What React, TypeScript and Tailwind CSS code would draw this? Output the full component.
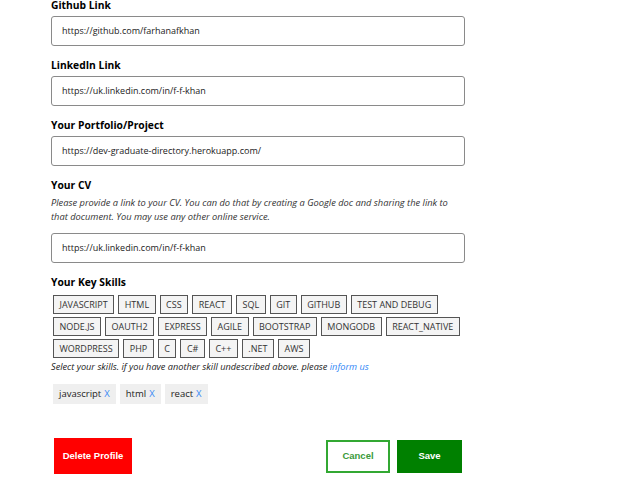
import React from "react";

const skills = [
  "JAVASCRIPT",
  "HTML",
  "CSS",
  "REACT",
  "SQL",
  "GIT",
  "GITHUB",
  "TEST AND DEBUG",
  "NODE.JS",
  "OAUTH2",
  "EXPRESS",
  "AGILE",
  "BOOTSTRAP",
  "MONGODB",
  "REACT_NATIVE",
  "WORDPRESS",
  "PHP",
  "C",
  "C#",
  "C++",
  ".NET",
  "AWS",
];

const selected = ["javascript", "html", "react"];

const Field = ({ label, value }: { label: string; value: string }) => (
  <div className="mb-[12px]">
    <div className="h-[14px] leading-[14px] text-[10.3px] font-bold text-black mb-[4px]">
      {label}
    </div>
    <div className="h-[30px] border border-[#8a8a8a] rounded-[3px] flex items-center px-[10px] text-[9px] text-[#222]">
      {value}
    </div>
  </div>
);

export default function App() {
  return (
    <div className="min-h-screen bg-white font-['Open_Sans',sans-serif]">
      <div className="ml-[51px] w-[414px] -mt-[2px]">
        <Field label="Github Link" value="https://github.com/farhanafkhan" />
        <Field label="LinkedIn Link" value="https://uk.linkedin.com/in/f-f-khan" />
        <Field
          label="Your Portfolio/Project"
          value="https://dev-graduate-directory.herokuapp.com/"
        />

        <div className="mb-[12px]">
          <div className="h-[14px] leading-[14px] text-[10.3px] font-bold text-black">
            Your CV
          </div>
          <p className="mt-[4px] mb-[9px] text-[9.3px] leading-[14px] italic text-[#333]">
            Please provide a link to your CV. You can do that by creating a Google doc and
            sharing the link to that document. You may use any other online service.
          </p>
          <div className="h-[30px] border border-[#8a8a8a] rounded-[3px] flex items-center px-[10px] text-[9px] text-[#222]">
            https://uk.linkedin.com/in/f-f-khan
          </div>
        </div>

        <div className="h-[14px] leading-[14px] text-[10.3px] font-bold text-black mb-[6px]">
          Your Key Skills
        </div>
        <div className="flex flex-wrap gap-x-[4px] gap-y-[3px] pl-[2px]">
          {skills.map((s) => (
            <span
              key={s}
              className="h-[19px] px-[5.5px] flex items-center bg-[#f4f4f4] border border-[#555] text-[9px] text-[#333]"
            >
              {s}
            </span>
          ))}
        </div>
        <p className="mt-[2px] text-[9.2px] leading-[14px] italic text-[#222]">
          Select your skills. if you have another skill undescribed above. please{" "}
          <span className="text-[#2f86f6]">inform us</span>
        </p>

        <div className="flex gap-[4px] mt-[10px] pl-[2px]">
          {selected.map((s) => (
            <span
              key={s}
              className="h-[20px] px-[6px] flex items-center bg-[#efefef] text-[9.5px] text-[#222]"
            >
              {s}
              <span className="ml-[3px] text-[#3b8cf5]">X</span>
            </span>
          ))}
        </div>

        <div className="flex items-center justify-between mt-[34px] px-[3px] font-['Liberation_Sans',sans-serif] text-[9.5px] font-bold">
          <button className="w-[78px] h-[36px] bg-[#ff0000] text-white">
            Delete Profile
          </button>
          <div className="flex items-center gap-[7px]">
            <button className="w-[64px] h-[33px] border-2 border-[#32a832] bg-white text-[#3a9a3a]">
              Cancel
            </button>
            <button className="w-[65px] h-[33px] bg-[#008000] text-white">Save</button>
          </div>
        </div>
      </div>
    </div>
  );
}
